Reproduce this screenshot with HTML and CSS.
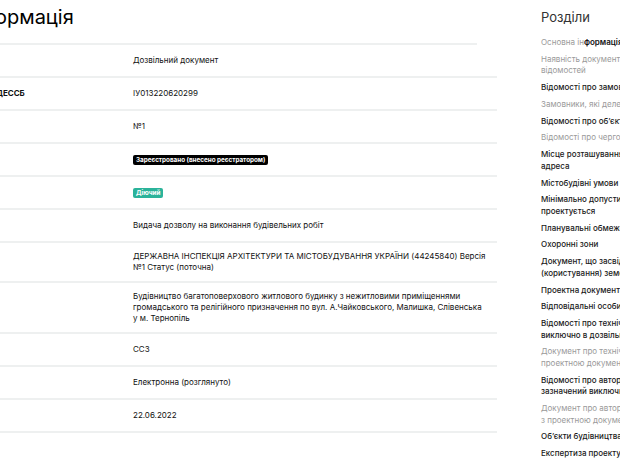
FILE: index.html
```html
<!DOCTYPE html>
<html lang="uk">
<head>
<meta charset="utf-8">
<link rel="stylesheet" href="styles.css">
</head>
<body>
<div class="page">
  <main class="main">
    <header class="head"><h1 class="title">Основна інформація</h1></header>
    <div class="row"><div class="label">Тип</div><div class="value">Дозвільний документ</div></div>
    <div class="row"><div class="label">Реєстраційний номер в ЄДЕССБ</div><div class="value">ІУ013220620299</div></div>
    <div class="row"><div class="label">Номер</div><div class="value">№1</div></div>
    <div class="row"><div class="label">Статус</div><div class="value"><span class="badge badge-dark">Зареєстровано (внесено реєстратором)</span></div></div>
    <div class="row"><div class="label">Стан</div><div class="value"><span class="badge badge-green">Діючий</span></div></div>
    <div class="row"><div class="label">Вид</div><div class="value">Видача дозволу на виконання будівельних робіт</div></div>
    <div class="row"><div class="label">Орган</div><div class="value">ДЕРЖАВНА ІНСПЕКЦІЯ АРХІТЕКТУРИ ТА МІСТОБУДУВАННЯ УКРАЇНИ (44245840) Версія №1 Статус (поточна)</div></div>
    <div class="row"><div class="label">Назва</div><div class="value">Будівництво багатоповерхового житлового будинку з нежитловими приміщеннями громадського та релігійного призначення по вул. А.Чайковського, Малишка, Слівенська у&nbsp;м. Тернопіль</div></div>
    <div class="row"><div class="label">Клас</div><div class="value">СС3</div></div>
    <div class="row"><div class="label">Форма</div><div class="value">Електронна (розглянуто)</div></div>
    <div class="row"><div class="label">Дата</div><div class="value">22.06.2022</div></div>
  </main>
  <aside class="side">
    <h2 class="side-title">Розділи</h2>
    <ul class="nav">
      <li class="nav-item muted">Основна ін<span class="strong">формація</span></li>
      <li class="nav-item muted">Наявність документа, що підтверджує зміну<br>відомостей</li>
      <li class="nav-item">Відомості про замовника</li>
      <li class="nav-item muted">Замовники, які делегували повноваження</li>
      <li class="nav-item">Відомості про обʼєкт</li>
      <li class="nav-item muted">Відомості про черговість</li>
      <li class="nav-item">Місце розташування обʼєкта будівництва,<br>адреса</li>
      <li class="nav-item">Містобудівні умови та обмеження</li>
      <li class="nav-item">Мінімально допустимі відстані від обʼєкта, що<br>проектується</li>
      <li class="nav-item">Планувальні обмеження</li>
      <li class="nav-item">Охоронні зони</li>
      <li class="nav-item">Документ, що засвідчує право власності<br>(користування) земельною ділянкою</li>
      <li class="nav-item">Проектна документація</li>
      <li class="nav-item">Відповідальні особи</li>
      <li class="nav-item">Відомості про технічний нагляд (зазначений<br>виключно в дозвільному документі)</li>
      <li class="nav-item muted">Документ про технічний нагляд відповідно з<br>проектною документацією</li>
      <li class="nav-item">Відомості про авторський нагляд<br>зазначений виключно в дозвільному документі</li>
      <li class="nav-item muted">Документ про авторський нагляд відповідно<br>з проектною документацією</li>
      <li class="nav-item">Обʼєкти будівництва</li>
      <li class="nav-item">Експертиза проекту</li>
    </ul>
  </aside>
</div>
</body>
</html>
```
FILE: styles.css
```css
html, body {
  margin: 0;
  padding: 0;
  overflow: hidden;
  background: #fff;
}
body {
  font-family: Inter, "Noto Sans", sans-serif;
  color: #111;
  width: 620px;
  height: 460px;
}
.page {
  display: flex;
  align-items: flex-start;
  margin-left: -126px;
  width: 1000px;
}
.main {
  width: 623px;
  flex: none;
}
.head {
  padding: 5px 0 14px;
  margin-right: 20px;
  border-bottom: 2px solid #eef0f0;
}
.title {
  margin: 0;
  font-size: 20px;
  line-height: 24px;
  font-weight: 400;
  color: #000;
}
.row {
  display: grid;
  grid-template-columns: 240px 1fr;
  align-items: center;
  padding: 8px 0 8px 19px;
  border-bottom: 2px solid #eef0f0;
}
.label {
  font-size: 8px;
  line-height: 15px;
  font-weight: 700;
  white-space: nowrap;
}
.value {
  font-size: 8px;
  line-height: 11px;
  padding-right: 6px;
}
.badge {
  display: inline-block;
  color: #fff;
  font-weight: 700;
  font-size: 6.3px;
  line-height: 10px;
  padding: 0 3px;
  border-radius: 2px;
  vertical-align: middle;
}
.badge-dark { background: #000; }
.badge-green { background: #2bb39a; }
.side {
  margin-left: 44px;
  width: 200px;
  flex: none;
}
.side-title {
  margin: 0;
  padding-top: 9px;
  font-size: 13px;
  line-height: 16px;
  font-weight: 400;
  color: #333;
}
.nav {
  list-style: none;
  margin: 12px 0 0;
  padding: 0;
}
.nav-item {
  font-size: 8px;
  line-height: 11.5px;
  margin-bottom: 5.3px;
  color: #1a1a1a;
  font-weight: 500;
  white-space: nowrap;
}
.nav-item.muted {
  color: #9a9a9a;
  font-weight: 400;
}
.strong {
  color: #111;
  font-weight: 600;
}
```
